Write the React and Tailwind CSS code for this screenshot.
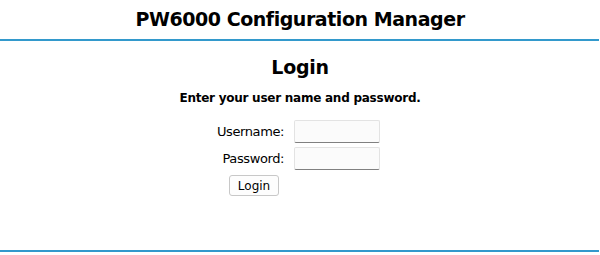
export default function App() {
  const font = { fontFamily: '"DejaVu Sans", Verdana, sans-serif' };
  return (
    <div className="w-[600px] h-[255px] bg-white text-black" style={font}>
      <div className="h-[39px] flex items-center justify-center">
        <h1 className="text-[19px] font-bold leading-none tracking-[-0.45px]">PW6000 Configuration Manager</h1>
      </div>
      <div className="w-[599px] h-[2px] bg-[#3399cc]" />
      <div className="h-[209px] flex flex-col items-center">
        <h2 className="mt-[14px] text-[19px] font-bold leading-[24px] tracking-[-0.3px]">Login</h2>
        <p className="mt-[11px] text-[12px] font-bold leading-[16px] tracking-[-0.25px]">Enter your user name and password.</p>
        <div className="mt-[14px] mr-[4px] flex flex-col gap-[4px]">
          <div className="flex items-center">
            <label className="w-[68px] text-right text-[13px] leading-[16px] tracking-[-0.4px]">Username:</label>
            <input className="ml-[10px] w-[86px] h-[23px] border border-[#e3e3e3] border-b-[#808080] rounded-[2px] bg-[#fbfbfb] outline-none" />
          </div>
          <div className="flex items-center">
            <label className="w-[68px] text-right text-[13px] leading-[16px] tracking-[-0.4px]">Password:</label>
            <input type="password" className="ml-[10px] w-[86px] h-[23px] border border-[#e3e3e3] border-b-[#808080] rounded-[2px] bg-[#fbfbfb] outline-none" />
          </div>
          <div className="mt-[1px] flex">
            <button className="ml-[13px] w-[50px] h-[21px] border border-[#c8c8c8] rounded-[3px] bg-[#fdfdfd] text-[12px] leading-none">Login</button>
          </div>
        </div>
      </div>
      <div className="w-[599px] h-[2px] bg-[#3399cc]" />
    </div>
  );
}
